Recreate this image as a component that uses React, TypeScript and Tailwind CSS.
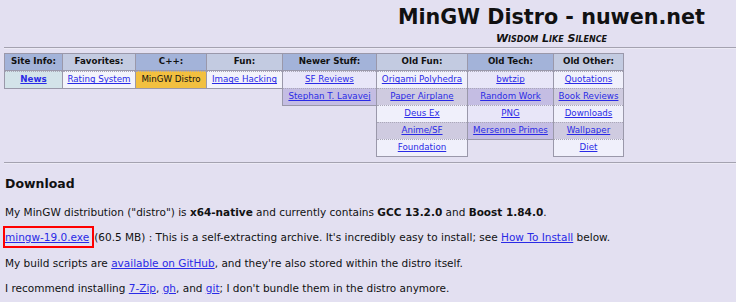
import React from "react";

type Cell = { t: string; bg: string; link?: boolean; bold?: boolean };
type Col = { head: string; hbg: string; w: number; cells: Cell[] };

const L = "#f0f0fb";
const D = "#cfcbe0";
const cols: Col[] = [
  { head: "Site Info:", hbg: "#a3b3d9", w: 58, cells: [{ t: "News", bg: "#d3e3e9", link: true, bold: true }] },
  { head: "Favorites:", hbg: "#c3cbe1", w: 73, cells: [{ t: "Rating System", bg: "#f3f3fb", link: true }] },
  { head: "C++:", hbg: "#a3b3d9", w: 71, cells: [{ t: "MinGW Distro", bg: "#f2c040" }] },
  { head: "Fun:", hbg: "#c3cbe1", w: 76, cells: [{ t: "Image Hacking", bg: "#f3f3fb", link: true }] },
  {
    head: "Newer Stuff:", hbg: "#a3b3d9", w: 94,
    cells: [{ t: "SF Reviews", bg: "#e8e6f8", link: true }, { t: "Stephan T. Lavavej", bg: "#c4bde3", link: true }],
  },
  {
    head: "Old Fun:", hbg: "#c3cbe1", w: 91,
    cells: [
      { t: "Origami Polyhedra", bg: L, link: true },
      { t: "Paper Airplane", bg: D, link: true },
      { t: "Deus Ex", bg: L, link: true },
      { t: "Anime/SF", bg: D, link: true },
      { t: "Foundation", bg: L, link: true },
    ],
  },
  {
    head: "Old Tech:", hbg: "#a3b3d9", w: 86,
    cells: [
      { t: "bwtzip", bg: "#e8e6f8", link: true },
      { t: "Random Work", bg: "#c4bde3", link: true },
      { t: "PNG", bg: "#e8e6f8", link: true },
      { t: "Mersenne Primes", bg: "#c4bde3", link: true },
    ],
  },
  {
    head: "Old Other:", hbg: "#c3cbe1", w: 70,
    cells: [
      { t: "Quotations", bg: L, link: true },
      { t: "Book Reviews", bg: D, link: true },
      { t: "Downloads", bg: L, link: true },
      { t: "Wallpaper", bg: D, link: true },
      { t: "Diet", bg: L, link: true },
    ],
  },
];

const A = ({ children }: { children: React.ReactNode }) => (
  <a href="#" className="text-[#2a2ae6] underline">
    {children}
  </a>
);

export default function App() {
  return (
    <div
      className="w-[736px] h-[302px] overflow-hidden bg-[#e3e0f1] text-[#111]"
      style={{ fontFamily: '"DejaVu Sans", Verdana, sans-serif' }}
    >
      <div className="h-[47px] flex justify-end pr-[31px] pt-[5px]">
        <div className="flex flex-col items-center">
          <div className="text-[20.7px] font-bold leading-[24px]">MinGW Distro - nuwen.net</div>
          <div className="text-[11px] italic font-semibold leading-[13px] mt-[3px] [font-variant:small-caps]">
            Wisdom Like Silence
          </div>
        </div>
      </div>
      <div className="h-[2px] ml-[4px] border-t border-[#a4a2b0] bg-[#eceaf5]" />
      <div className="flex items-start ml-[4px] mt-[4px] text-[8.7px]">
        {cols.map((c, i) => (
          <div
            key={i}
            className="flex flex-col border border-[#9a98aa] -ml-px first:ml-0"
            style={{ width: c.w + 1 }}
          >
            <div
              className="h-[17px] flex items-center justify-center font-bold border-b border-[#9a98aa] whitespace-nowrap"
              style={{ background: c.hbg }}
            >
              {c.head}
            </div>
            {c.cells.map((cell, j) => (
              <div
                key={j}
                className="h-[17px] flex items-center justify-center whitespace-nowrap border-t border-dotted border-[#aaa8b8] first:border-t-0"
                style={{ background: cell.bg }}
              >
                {cell.link ? (
                  <span className={"text-[#2a2ae6] underline " + (cell.bold ? "font-bold" : "")}>{cell.t}</span>
                ) : (
                  <span>{cell.t}</span>
                )}
              </div>
            ))}
          </div>
        ))}
      </div>
      <div className="h-[2px] ml-[4px] mt-[5px] border-t border-[#a4a2b0] bg-[#eceaf5]" />
      <div className="px-[5px] text-[10.5px] whitespace-nowrap">
        <div className="text-[12.5px] font-bold mt-[11px] leading-[18px]">Download</div>
        <p className="mt-[11px] leading-[16px]">
          My MinGW distribution ("distro") is <b>x64-native</b> and currently contains <b>GCC 13.2.0</b> and{" "}
          <b>Boost 1.84.0</b>.
        </p>
        <div className="mt-[6px] -ml-[2px] flex items-center leading-[16px]">
          <span className="border-2 border-[#ff0000] pl-[0px] pr-[3px] h-[22px] flex items-center">
            <A>mingw-19.0.exe</A>
          </span>
          <span className="whitespace-pre">(60.5 MB) : This is a self-extracting archive. It's incredibly easy to install; see </span>
          <A>How To Install</A>
          <span className="whitespace-pre"> below.</span>
        </div>
        <p className="mt-[7px] leading-[16px]">
          My build scripts are <A>available on GitHub</A>, and they're also stored within the distro itself.
        </p>
        <p className="mt-[9px] leading-[16px]">
          I recommend installing <A>7-Zip</A>, <A>gh</A>, and <A>git</A>; I don't bundle them in the distro anymore.
        </p>
      </div>
    </div>
  );
}
